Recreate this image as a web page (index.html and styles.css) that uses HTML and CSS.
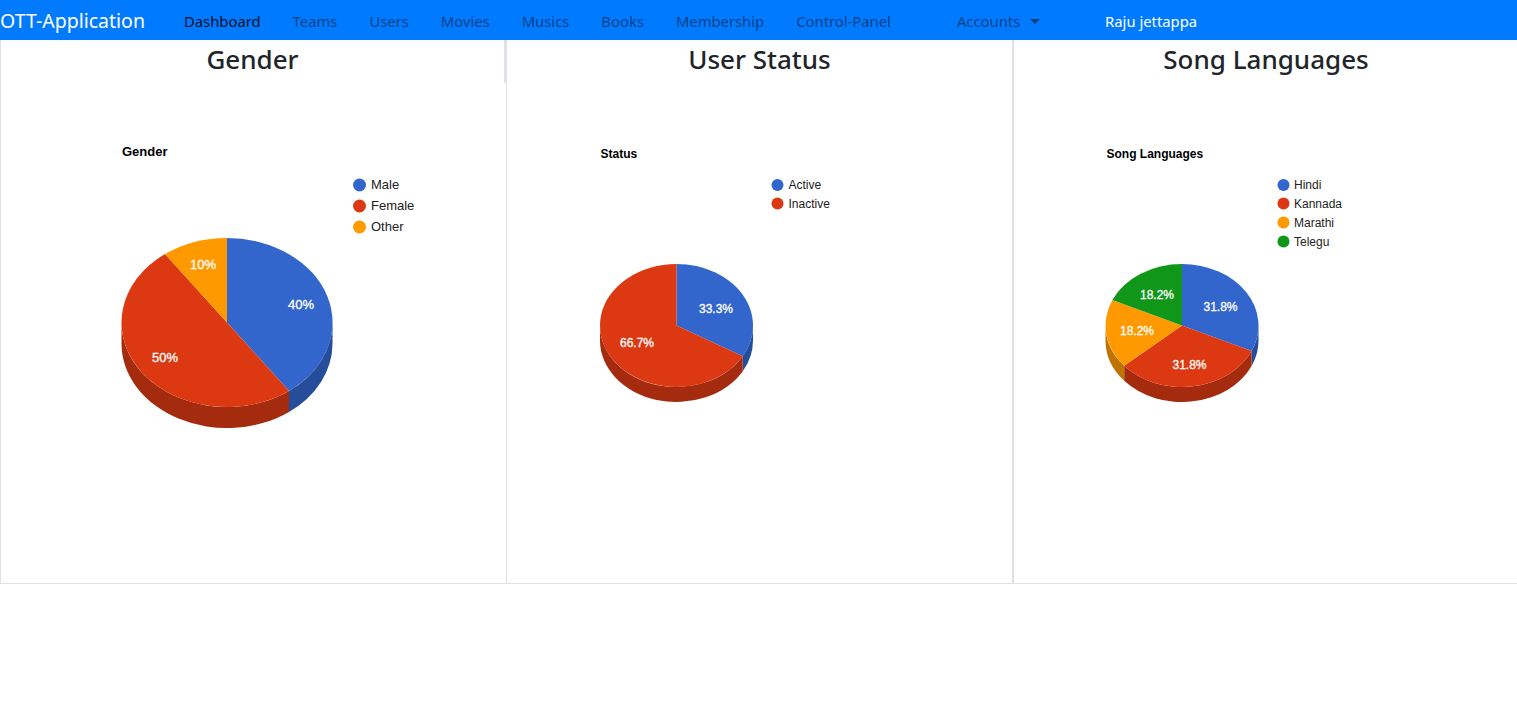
FILE: index.html
```html
<!DOCTYPE html>
<html lang="en">
<head>
    <meta charset="UTF-8">
    <title>Dashboard</title>
    <link rel="stylesheet" href="styles.css">
</head>
<body>
    <nav class="navbar">
        <a class="brand">OTT-Application</a>
        <ul class="nav-list">
            <li class="nav-link active">Dashboard</li>
            <li class="nav-link">Teams</li>
            <li class="nav-link">Users</li>
            <li class="nav-link">Movies</li>
            <li class="nav-link">Musics</li>
            <li class="nav-link">Books</li>
            <li class="nav-link">Membership</li>
            <li class="nav-link">Control-Panel</li>
        </ul>
        <div class="nav-link accounts">Accounts <span class="caret"></span></div>
        <div class="nav-user">Raju jettappa</div>
    </nav>

    <div class="charts">
        <!-- Gender -->
        <section class="chart-col">
            <h3 class="chart-heading first">Gender</h3>
            <svg class="pie" viewBox="0 83 506 500">
                <text class="pie-title" x="122" y="155.500">Gender</text>

                <circle cx="359.500" cy="185" r="6.500" fill="#3366cc"/>
                <text class="legend" x="371" y="189">Male</text>
                <circle cx="359.500" cy="206" r="6.500" fill="#dc3912"/>
                <text class="legend" x="371" y="210">Female</text>
                <circle cx="359.500" cy="227" r="6.500" fill="#ff9900"/>
                <text class="legend" x="371" y="231">Other</text>

                <path d="M289 390.900 A105.500 84.500 0 0 0 332.500 322.500 V343.500 A105.500 84.500 0 0 1 289 411.900 Z" fill="#264d99"/>
                <path d="M289 390.900 A105.500 84.500 0 0 1 121.500 322.500 V343.500 A105.500 84.500 0 0 0 289 411.900 Z" fill="#a52b0e"/>
                <path d="M227 322.500 V238 A105.500 84.500 0 0 1 289 390.900 Z" fill="#3366cc"/>
                <path d="M227 322.500 L289 390.900 A105.500 84.500 0 0 1 165 254.100 Z" fill="#dc3912"/>
                <path d="M227 322.500 L165 254.100 A105.500 84.500 0 0 1 227 238 Z" fill="#ff9900"/>

                <text class="slice-label lg" x="288" y="309">40%</text>
                <text class="slice-label lg" x="152" y="362">50%</text>
                <text class="slice-label lg" x="190" y="269">10%</text>
            </svg>
        </section>

        <!-- User status -->
        <section class="chart-col">
            <h3 class="chart-heading">User Status</h3>
            <svg class="pie" viewBox="506 83 506 500">
                <text class="pie-title sm" x="600.500" y="158">Status</text>

                <circle cx="777.500" cy="185" r="6" fill="#3366cc"/>
                <text class="legend sm" x="788.500" y="189">Active</text>
                <circle cx="777.500" cy="203.500" r="6" fill="#dc3912"/>
                <text class="legend sm" x="788.500" y="208">Inactive</text>

                <path d="M742.750 356.250 A76.500 61.500 0 0 0 753 325.500 V340.500 A76.500 61.500 0 0 1 742.750 371.250 Z" fill="#264d99"/>
                <path d="M742.750 356.250 A76.500 61.500 0 0 1 600 325.500 V340.500 A76.500 61.500 0 0 0 742.750 371.250 Z" fill="#a52b0e"/>
                <path d="M676.500 325.500 V264 A76.500 61.500 0 0 1 742.750 356.250 Z" fill="#3366cc"/>
                <path d="M676.500 325.500 L742.750 356.250 A76.500 61.500 0 1 1 676.500 264 Z" fill="#dc3912"/>

                <text class="slice-label" x="699" y="313">33.3%</text>
                <text class="slice-label" x="620" y="347">66.7%</text>
            </svg>
        </section>

        <!-- Song languages -->
        <section class="chart-col">
            <h3 class="chart-heading">Song Languages</h3>
            <svg class="pie" viewBox="1012 83 506 500">
                <text class="pie-title sm" x="1106.500" y="158">Song Languages</text>

                <circle cx="1283.500" cy="185" r="6" fill="#3366cc"/>
                <text class="legend sm" x="1294" y="189">Hindi</text>
                <circle cx="1283.500" cy="203.500" r="6" fill="#dc3912"/>
                <text class="legend sm" x="1294" y="208">Kannada</text>
                <circle cx="1283.500" cy="222.500" r="6" fill="#ff9900"/>
                <text class="legend sm" x="1294" y="227">Marathi</text>
                <circle cx="1283.500" cy="241.500" r="6" fill="#109618"/>
                <text class="legend sm" x="1294" y="246">Telegu</text>

                <path d="M1251.600 351 A76.500 61.500 0 0 0 1258.500 325.500 V340.500 A76.500 61.500 0 0 1 1251.600 366 Z" fill="#264d99"/>
                <path d="M1251.600 351 A76.500 61.500 0 0 1 1124.200 365.800 V380.800 A76.500 61.500 0 0 0 1251.600 366 Z" fill="#a52b0e"/>
                <path d="M1124.200 365.800 A76.500 61.500 0 0 1 1105.500 325.500 V340.500 A76.500 61.500 0 0 0 1124.200 380.800 Z" fill="#bf7300"/>
                <path d="M1182 325.500 V264 A76.500 61.500 0 0 1 1251.600 351 Z" fill="#3366cc"/>
                <path d="M1182 325.500 L1251.600 351 A76.500 61.500 0 0 1 1124.200 365.800 Z" fill="#dc3912"/>
                <path d="M1182 325.500 L1124.200 365.800 A76.500 61.500 0 0 1 1112.400 300 Z" fill="#ff9900"/>
                <path d="M1182 325.500 L1112.400 300 A76.500 61.500 0 0 1 1182 264 Z" fill="#109618"/>

                <text class="slice-label" x="1203.500" y="311">31.8%</text>
                <text class="slice-label" x="1172.500" y="369">31.8%</text>
                <text class="slice-label" x="1120" y="335">18.2%</text>
                <text class="slice-label" x="1140" y="299">18.2%</text>
            </svg>
        </section>
    </div>
</body>
</html>
```

FILE: styles.css
```css
* {
    box-sizing: border-box;
    margin: 0;
    padding: 0;
}

body {
    font-family: "Noto Sans", "Open Sans", sans-serif;
    background-color: #fff;
    color: #212529;
    overflow-x: hidden;
}

/* Top bar */
.navbar {
    display: flex;
    align-items: center;
    height: 40px;
    background-color: #007bff;
    font-size: 14.8px;
    white-space: nowrap;
}

.brand {
    color: #fff;
    font-size: 19.5px;
    width: 168px;
}

.nav-list {
    display: flex;
    list-style: none;
}

.nav-link {
    color: rgba(0, 0, 0, 0.5);
    padding: 1px 16px 0;
}

.nav-link.active {
    color: rgba(0, 0, 0, 0.9);
}

.accounts {
    margin-left: 34px;
    margin-right: 49px;
}

.caret {
    display: inline-block;
    margin-left: 6px;
    vertical-align: 3px;
    border-top: 5px solid;
    border-left: 5px solid transparent;
    border-right: 5px solid transparent;
}

.nav-user {
    color: #fff;
    padding-top: 1px;
}

/* Charts row */
.charts {
    display: grid;
    grid-template-columns: repeat(3, 506px);
    height: 544px;
    border-bottom: 1px solid #dee2e6;
}

.chart-col {
    border-left: 1px solid #dee2e6;
}

.chart-col:last-child {
    border-left-width: 2px;
}

.chart-heading {
    height: 43px;
    font-size: 26px;
    font-weight: 500;
    line-height: 39px;
    text-align: center;
}

.chart-heading.first {
    border-right: 2px solid #dee2e6;
}

.pie {
    display: block;
    width: 506px;
    height: 500px;
    margin-left: -1px;
    font-family: "Liberation Sans", Arial, sans-serif;
}

.chart-col:last-child .pie {
    margin-left: -2px;
}

.pie-title {
    font-size: 13px;
    font-weight: 700;
    fill: #000;
}

.pie-title.sm {
    font-size: 12px;
}

.legend {
    font-size: 13px;
    fill: #222;
}

.legend.sm {
    font-size: 12px;
}

.slice-label {
    font-size: 12px;
    fill: #fff;
    stroke: #fff;
    stroke-width: 0.3px;
}

.slice-label.lg {
    font-size: 13px;
}
```
